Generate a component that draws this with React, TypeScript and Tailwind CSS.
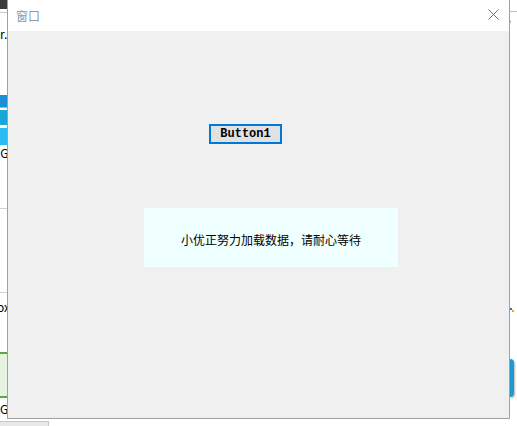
import React from 'react'

const cjk = { fontFamily: '"Noto Sans CJK SC", "Liberation Sans", sans-serif' }

// the page behind the window, only its left and right edges show
function LeftStrip() {
  return (
    <div className="w-[7px] flex flex-col overflow-hidden text-[12px] leading-none text-black" style={cjk}>
      <div className="h-[9px] bg-[#3a3a3a]" />
      <div className="mt-[3px] h-px bg-[#c8c8c8]" />
      <div className="mt-[15px] h-[12px]">r.</div>
      <div className="mt-[55px] h-[13px] bg-[#1c8fd8] border-b border-[#7cc4ee]" />
      <div className="mt-[2px] h-[15px] bg-[#17a6d8]" />
      <div className="mt-[3px] h-[17px] bg-[#2bbcf4]" />
      <div className="mt-[2px] h-[12px] ml-[-3px] whitespace-nowrap">iG</div>
      <div className="mt-[49px] h-px bg-[#d0d0d0]" />
      <div className="mt-[83px] h-px bg-[#d0d0d0]" />
      <div className="mt-[8px] h-[12px] ml-[-3px] whitespace-nowrap">ox</div>
      <div className="mt-[39px] h-[46px] bg-[#e6f3e0] border-y-2 border-[#5aa845]" />
      <div className="mt-[5px] h-[12px]">G</div>
    </div>
  )
}

function RightStrip() {
  return (
    <div className="w-[7px] flex flex-col overflow-hidden">
      <div className="mt-[11px] h-px bg-[#c0c0c0]" />
      <div className="mt-[8px] w-px h-[3px] bg-[#c0c0c0]" />
      <div className="mt-[285px] flex">
        <div className="w-[2px] h-[2px] bg-[#3070c0]" />
        <div className="mt-[2px] w-[2px] h-[2px] bg-[#e8a030]" />
      </div>
      <div className="mt-[47px] w-[4px] h-[38px] bg-[#1e9ad0] rounded-r-sm shadow-[1px_1px_2px_rgba(0,0,0,0.3)]" />
    </div>
  )
}

export default function App() {
  return (
    <div className="w-[517px] h-[426px] bg-white overflow-hidden flex flex-col">
      <div className="h-[419px] flex">
        <LeftStrip />

        {/* Window */}
        <div className="w-[503px] flex flex-col border-x border-b border-[#a0a0a0] bg-[#f0f0f0]">
          <div className="h-[31px] shrink-0 bg-white flex items-center justify-between pl-[8px] pr-[10px]">
            <span className="text-[12px] text-[#8a9aaa]" style={cjk}>窗口</span>
            <svg width="11" height="11" viewBox="0 0 11 11" className="mt-[-2px]">
              <path d="M0.5 0.5 L10.5 10.5 M10.5 0.5 L0.5 10.5" stroke="#707070" strokeWidth="1" />
            </svg>
          </div>

          <div className="flex-1 flex flex-col items-start">
            <button
              className="ml-[201px] mt-[93px] w-[73px] h-[20px] border-2 border-[#0078d7] bg-[#e1e1e1] text-[12px] font-semibold leading-none text-black flex items-center justify-center"
              style={{ fontFamily: '"Liberation Mono", "Noto Sans CJK SC", monospace' }}
            >
              Button1
            </button>

            <div className="ml-[136px] mt-[64px] w-[254px] h-[59px] bg-[#f0ffff] flex items-center justify-center pt-[5px]">
              <span className="text-[12px] text-black" style={cjk}>小优正努力加载数据，请耐心等待</span>
            </div>
          </div>
        </div>

        <RightStrip />
      </div>

      <div className="mt-[2px] w-[49px] flex-1 bg-[#e8e8e8] border-t border-r border-[#c8c8c8]" />
    </div>
  )
}
